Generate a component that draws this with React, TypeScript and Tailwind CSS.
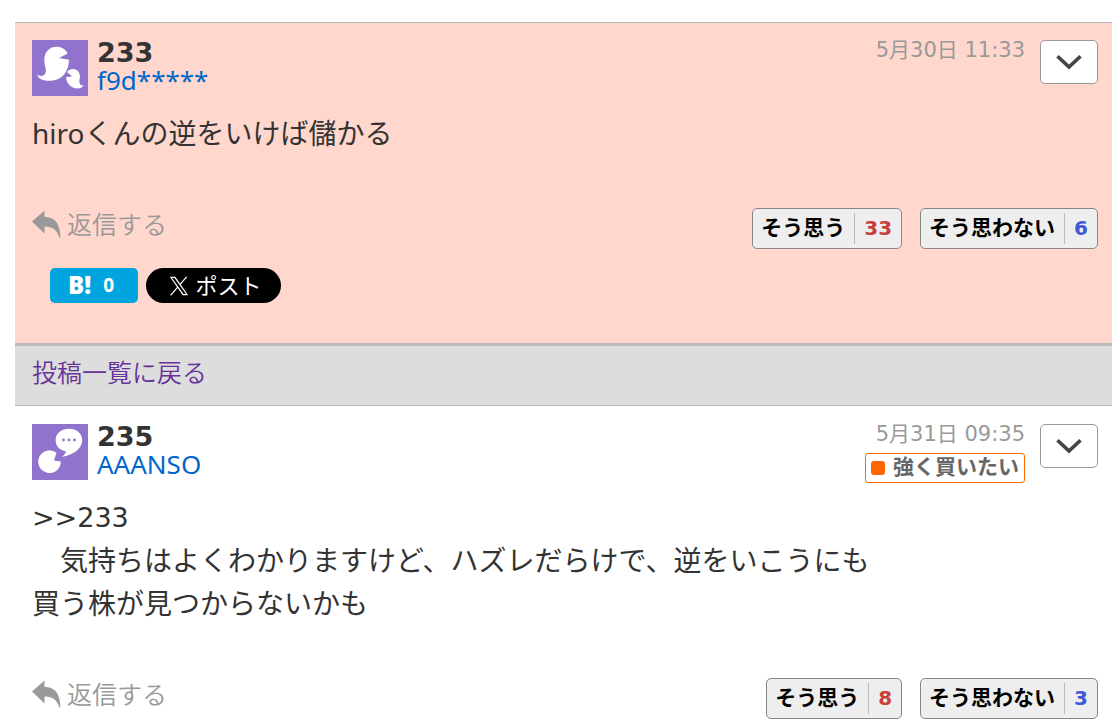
import type { ReactNode } from 'react';

interface VoteButtonProps {
  label: string;
  count: number;
  countClass: string;
}

function VoteButton({ label, count, countClass }: VoteButtonProps) {
  return (
    <button className="flex items-center h-[41px] pl-2 pr-[9px] rounded-[5px] border border-[#888] bg-[#eee] font-bold leading-6 cursor-pointer">
      <span className="text-[21px] text-black pr-[9px] pb-1">{label}</span>
      <span
        className={`flex items-center h-[31px] pl-[9px] pb-0.5 border-l border-[#bbb] font-['DejaVu_Sans',sans-serif] text-[20px] ${countClass}`}
      >
        {count}
      </span>
    </button>
  );
}

function MenuButton() {
  return (
    <button
      aria-label="メニュー"
      className="flex items-center justify-center w-[58px] h-11 rounded-[5px] border border-[#999] bg-white cursor-pointer"
    >
      <svg width="26" height="18" viewBox="0 0 26 18" fill="none" stroke="#444" strokeWidth="3.6">
        <path d="M1.500 3.200 13 14 24.500 3.200" />
      </svg>
    </button>
  );
}

function ReplyLink() {
  return (
    <a href="#reply" className="flex items-center gap-1.5 text-[25px] leading-8 font-[350] text-[#999]">
      <svg width="29" height="29" viewBox="0 0 29 29" fill="#999">
        <path d="M0 11.5 12.500 0.5v6.500C22 7 28 12 28.500 27.500h-1C25 20 21 16.700 12.500 16.500v7Z" />
      </svg>
      返信する
    </a>
  );
}

function GhostAvatar() {
  return (
    <svg width="56" height="56" viewBox="0 0 56 56" className="shrink-0">
      <rect width="56" height="56" fill="#9172cc" />
      <g fill="#fff">
        <path d="M5 34.500c3 2.500 7.500 1.500 8.500-1.500 1.200-3.500-1.200-8-1.200-13C12.300 11.500 18 6.800 24.500 6.800c5 0 9 2.500 11.200 6.600L27 18l10 1.800c-.2 11.500-6.500 20.700-18.500 21C12 41 6.500 39.500 5 34.500Z" />
        <path d="M35 32c2.500-3.300 7.500-4 10.500-1.200 4.500 4.200 1.200 9 2 12.200.5 2.200 2.500 2.800 4 2-1 2.500-3 3.500-6 3.500-6.500 0-11-4.800-11.500-11.200l6-1Z" />
      </g>
    </svg>
  );
}

function TalkAvatar() {
  return (
    <svg width="56" height="56" viewBox="0 0 56 56" className="shrink-0">
      <rect width="56" height="56" fill="#9172cc" />
      <path d="M24.500 28.800A11.300 11.300 0 1 0 28.800 37.500L22 36.500Z" fill="#fff" />
      <path
        d="M37 4.800c7.500 0 13.200 4.600 13.200 11.200C50.200 25 41 31 29.800 33c2.200-1.800 3.800-3.500 4.200-5.500C27.500 26 23.600 22 23.600 16c0-6.600 5.900-11.200 13.400-11.200Z"
        fill="#fff"
      />
      <g fill="#9172cc">
        <circle cx="31.500" cy="16" r="1.400" />
        <circle cx="37" cy="16" r="1.400" />
        <circle cx="42.500" cy="16" r="1.400" />
      </g>
    </svg>
  );
}

function ShareButtons() {
  return (
    <div className="flex gap-2 mt-[19px] pl-[18px]">
      <button className="flex items-center justify-center gap-3 w-[88px] h-[35px] pr-1.5 pb-0.5 rounded-[5px] bg-[#00a4de] text-white font-bold cursor-pointer">
        <span className="font-['Open_Sans',sans-serif] font-extrabold text-[24px] leading-8">B!</span>
        <span className="text-[19px] leading-8">0</span>
      </button>
      <button className="flex items-center justify-center gap-1.5 w-[135px] h-[35px] pl-1 rounded-full bg-black text-white cursor-pointer">
        <svg width="20" height="20" viewBox="0 0 24 24" fill="#fff">
          <path d="M14.095 10.317 22.286 1H20.345L13.230 9.088 7.551 1H1L9.590 13.231 1 23H2.941L10.451 14.457 16.449 23H23ZM11.436 13.338 10.564 12.120 3.640 2.432H6.621L12.213 10.258 13.082 11.475 20.346 21.639H17.365Z" />
        </svg>
        <span className="text-[22px] leading-8 pb-0.5">ポスト</span>
      </button>
    </div>
  );
}

interface PostProps {
  no: number;
  user: string;
  date: string;
  avatar: ReactNode;
  agree: number;
  disagree: number;
  feeling?: string;
  className: string;
  share?: boolean;
  children: ReactNode;
}

function Post({ no, user, date, avatar, agree, disagree, feeling, className, share, children }: PostProps) {
  return (
    <article className={`pl-[17px] pr-[14px] ${className}`}>
      <header className="flex items-start h-14">
        {avatar}
        <div className="pl-[9px] flex-1">
          <p className="font-['DejaVu_Sans',sans-serif] font-bold text-[27px] leading-[26px]">{no}</p>
          <a href="#user" className="block text-[26px] leading-7 text-[#06c]">
            {user}
          </a>
        </div>
        <div className="flex flex-col items-end mr-[15px]">
          <time className="font-['DejaVu_Sans','Noto_Sans_CJK_JP',sans-serif] text-[21px] leading-5 text-[#999]">
            {date}
          </time>
          {feeling && (
            <span className="flex items-center gap-2 h-[30px] mt-[9px] px-[5px] rounded-[3px] border border-[#f60] bg-white">
              <span className="size-[14px] rounded-[3px] bg-[#f60]" />
              <span className="text-[21px] leading-6 font-bold text-[#666] pb-1">{feeling}</span>
            </span>
          )}
        </div>
        <MenuButton />
      </header>
      <div className="mt-4 text-[28px] leading-[43px]">{children}</div>
      <div className="flex items-start justify-between mt-[53px]">
        <ReplyLink />
        <div className="flex gap-[18px]">
          <VoteButton label="そう思う" count={agree} countClass="text-[#c9403a]" />
          <VoteButton label="そう思わない" count={disagree} countClass="text-[#4058d8]" />
        </div>
      </div>
      {share && <ShareButtons />}
    </article>
  );
}

export default function App() {
  return (
    <main className="pt-[22px] pl-[15px] bg-white text-[#333] font-['Noto_Sans','Noto_Sans_CJK_JP',sans-serif]">
      <Post
        no={233}
        user="f9d*****"
        date="5月30日 11:33"
        avatar={<GhostAvatar />}
        agree={33}
        disagree={6}
        share
        className="pt-[17px] pb-10 border-t border-[#bbb] bg-[#ffd7cd]"
      >
        <p>hiroくんの逆をいけば儲かる</p>
      </Post>
      <nav className="h-[63px] pl-[17px] pt-2.5 border-t-3 border-b border-[#bbb] bg-[#ddd]">
        <a href="#list" className="text-[25px] leading-8 font-[350] text-[#639]">
          投稿一覧に戻る
        </a>
      </nav>
      <Post
        no={235}
        user="AAANSO"
        date="5月31日 09:35"
        avatar={<TalkAvatar />}
        agree={8}
        disagree={3}
        feeling="強く買いたい"
        className="pt-[18px]"
      >
        <p className="font-['DejaVu_Sans',sans-serif] text-[27px]">&gt;&gt;233</p>
        <p>　気持ちはよくわかりますけど、ハズレだらけで、逆をいこうにも</p>
        <p>買う株が見つからないかも</p>
      </Post>
    </main>
  );
}
